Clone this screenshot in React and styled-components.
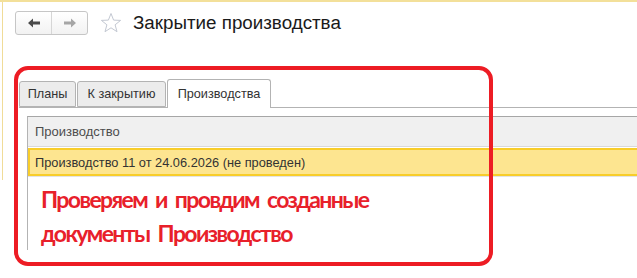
import React from "react";
import styled, { createGlobalStyle } from "styled-components";

const GlobalStyle = createGlobalStyle`
  html, body {
    margin: 0;
    padding: 0;
    background: #ffffff;
  }
  body {
    font-family: Arial, "Liberation Sans", sans-serif;
  }
`;

const Window = styled.div`
  position: relative;
  width: 637px;
  height: 278px;
  overflow: hidden;
  background: #ffffff;
  border-top: 2px solid #f3e09a;
  box-sizing: border-box;
`;

const LeftFrame = styled.div`
  position: absolute;
  left: 2px;
  top: 0;
  width: 1px;
  height: 178px;
  background: #f0dc98;
`;

const TitleBar = styled.div`
  display: flex;
  align-items: center;
  height: 24px;
  padding: 9px 0 0 15px;
`;

const NavGroup = styled.div`
  display: flex;
  width: 73px;
  height: 24px;
  box-sizing: border-box;
  border: 1px solid #c6c6c6;
  border-radius: 3px;
  background: linear-gradient(#ffffff, #f2f2f2);
`;

const NavButton = styled.div`
  flex: 1;
  display: flex;
  align-items: center;
  justify-content: center;
  & + & {
    border-left: 1px solid #d6d6d6;
  }
`;

const StarBox = styled.div`
  display: flex;
  margin-left: 12px;
  width: 22px;
  height: 22px;
`;

const Title = styled.h1`
  margin: 0 0 0 11px;
  font-family: Arial, "Liberation Sans", sans-serif;
  font-weight: normal;
  font-size: 18.8px;
  color: #1a1a1a;
`;

const Body = styled.div`
  padding: 44px 0 0 19px;
`;

const TabBar = styled.div`
  display: flex;
  align-items: flex-end;
  height: 28px;
  border-bottom: 1px solid #b3b3b3;
`;

const Tab = styled.div`
  box-sizing: border-box;
  width: ${(p) => p.$width}px;
  height: ${(p) => (p.$active ? "29px" : "26px")};
  margin-bottom: ${(p) => (p.$active ? "-1px" : "0")};
  display: flex;
  align-items: center;
  justify-content: center;
  font-size: 12.7px;
  color: #333333;
  background: ${(p) => (p.$active ? "#ffffff" : "#ececec")};
  border: 1px solid #b3b3b3;
  border-bottom: ${(p) => (p.$active ? "none" : "1px solid #b3b3b3")};
  border-radius: 3px 3px 0 0;
  & + & {
    margin-left: 1px;
  }
`;

const Panel = styled.div`
  padding: 8px 0 0 8px;
`;

const Table = styled.div`
  border-top: 1px solid #a6a6a6;
  border-left: 1px solid #b3b3b3;
`;

const HeaderCell = styled.div`
  height: 29px;
  display: flex;
  align-items: center;
  padding-left: 7px;
  background: #f0f0f0;
  border-bottom: 1px solid #d9d9d9;
  font-size: 13px;
  color: #4d4d4d;
`;

const Row = styled.div`
  height: 28px;
  box-sizing: border-box;
  margin-top: 1px;
  display: flex;
  align-items: center;
  padding-left: 5px;
  background: #fde590;
  border: 2px solid #f8cd2a;
  border-right: none;
  font-size: 12.8px;
  color: #333333;
`;

const RowSep = styled.div`
  height: 1px;
  background: #e3e3e3;
`;

const Note = styled.div`
  padding: 5px 0 0 13px;
  font-family: Lato, "Open Sans", sans-serif;
  font-weight: bold;
  font-size: 23px;
  letter-spacing: -1.6px;
  word-spacing: 4px;
  line-height: 34px;
  color: #e8202a;
`;

const Highlight = styled.div`
  position: absolute;
  left: 14px;
  top: 64px;
  width: 479px;
  height: 200px;
  box-sizing: border-box;
  border: 4px solid #ed1c24;
  border-radius: 14px;
  pointer-events: none;
`;

function Arrow({ dir, color }) {
  const d = dir === "left" ? "M1 5 L6 0.5 V3.5 H13 V6.5 H6 V9.5 Z" : "M13 5 L8 0.5 V3.5 H1 V6.5 H8 V9.5 Z";
  return (
    <svg width="14" height="10" viewBox="0 0 14 10">
      <path d={d} fill={color} />
    </svg>
  );
}

function Star() {
  return (
    <svg width="22" height="22" viewBox="0 0 22 22">
      <path
        d="M11 1.5 L13.6 8.1 L20.6 8.4 L15.1 12.8 L17 19.7 L11 15.8 L5 19.7 L6.9 12.8 L1.4 8.4 L8.4 8.1 Z"
        fill="none"
        stroke="#c3c8d2"
        strokeWidth="1"
        strokeLinejoin="round"
      />
    </svg>
  );
}

export default function App() {
  return (
    <>
      <GlobalStyle />
      <Window>
        <LeftFrame />
        <TitleBar>
          <NavGroup>
            <NavButton>
              <Arrow dir="left" color="#4a4a4a" />
            </NavButton>
            <NavButton>
              <Arrow dir="right" color="#a6a6a6" />
            </NavButton>
          </NavGroup>
          <StarBox>
            <Star />
          </StarBox>
          <Title>Закрытие производства</Title>
        </TitleBar>
        <Body>
          <TabBar>
            <Tab $width={57}>Планы</Tab>
            <Tab $width={89}>К закрытию</Tab>
            <Tab $width={104} $active>
              Производства
            </Tab>
          </TabBar>
          <Panel>
            <Table>
              <HeaderCell>Производство</HeaderCell>
              <Row>Производство 11 от 24.06.2026 (не проведен)</Row>
              <RowSep />
              <Note>
                Проверяем и провдим созданные
                <br />
                документы Производство
              </Note>
            </Table>
          </Panel>
        </Body>
        <Highlight />
      </Window>
    </>
  );
}
